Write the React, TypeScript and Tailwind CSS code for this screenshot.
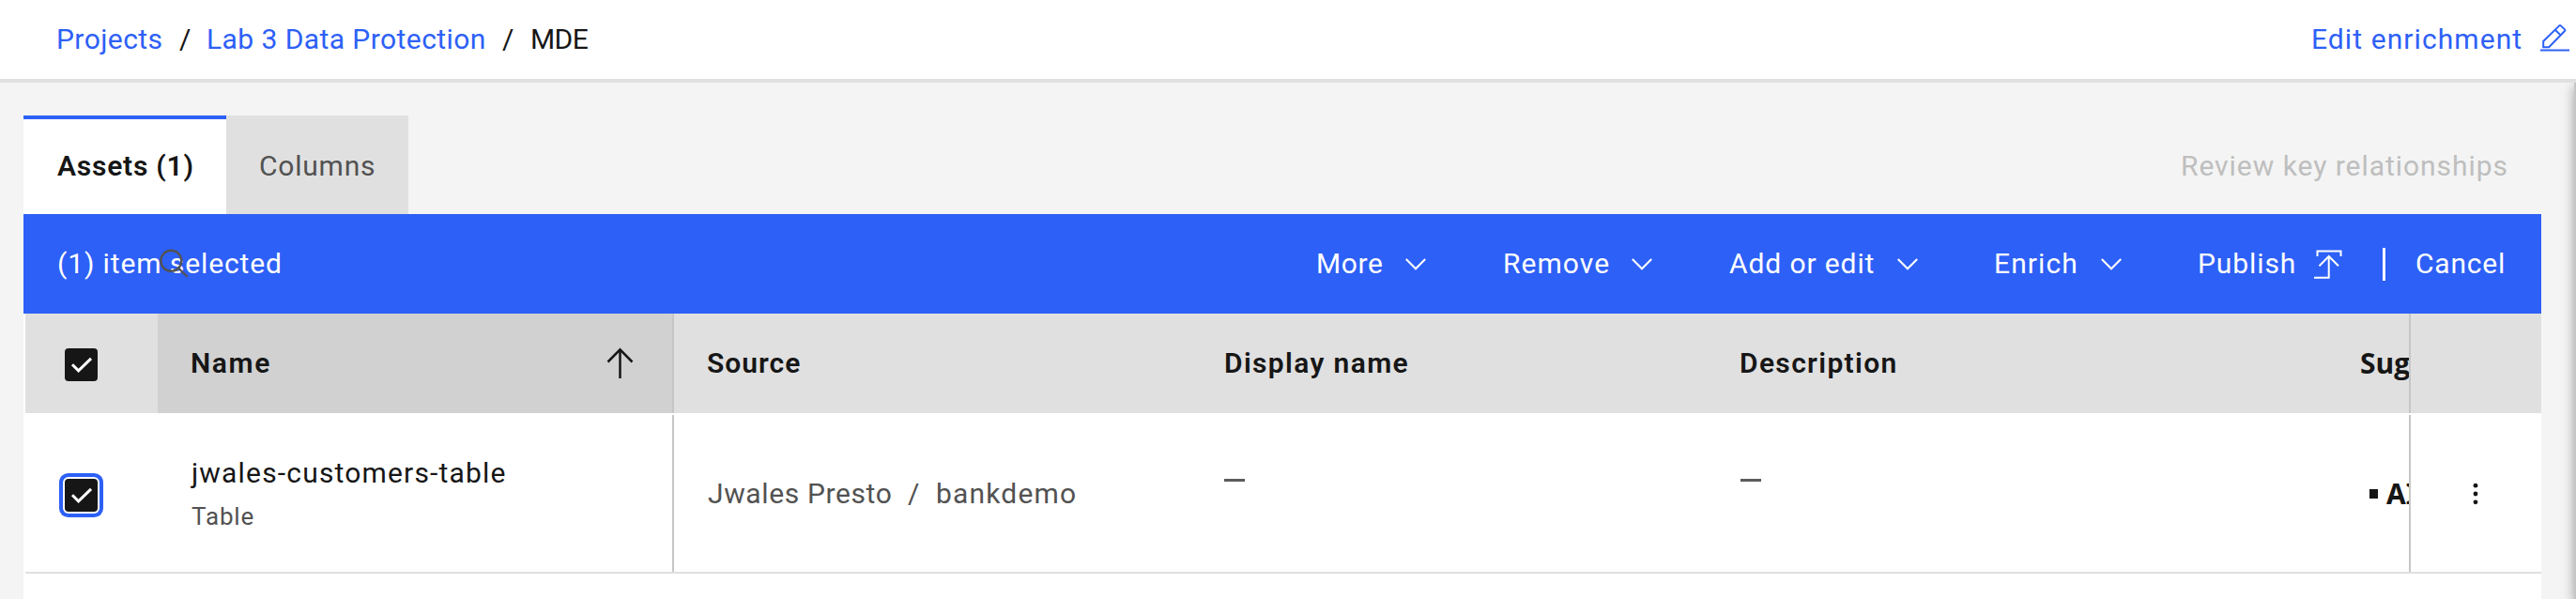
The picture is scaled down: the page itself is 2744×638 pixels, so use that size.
import type { ReactNode } from "react";

function Chevron() {
  return (
    <svg className="h-[14px] w-[24px] shrink-0" viewBox="0 0 24 14" fill="none" stroke="#fff" strokeWidth="2.1">
      <path d="M1.8 2 L12 12.2 L22.2 2" />
    </svg>
  );
}

function MenuButton({ className, labelClass, children }: { className: string; labelClass: string; children: ReactNode }) {
  return (
    <button className={`flex shrink-0 items-center text-left ${className}`}>
      <span className={`shrink-0 whitespace-nowrap ${labelClass}`}>{children}</span>
      <Chevron />
    </button>
  );
}

function Checkbox({ focused = false }: { focused?: boolean }) {
  return (
    <span
      className={`block h-[35px] w-[35px] shrink-0 rounded-[4px] bg-[#161616] ${
        focused ? "shadow-[0_0_0_2px_#fff,0_0_0_6px_#2d60f6]" : ""
      }`}
    >
      <svg className="h-[35px] w-[35px]" viewBox="0 0 35 35" fill="none" stroke="#fff" strokeWidth="3">
        <path d="M8 17.2 L14.6 23.8 L28 10.8" />
      </svg>
    </span>
  );
}

function PageHeader() {
  return (
    <header className="flex h-[88px] shrink-0 items-center border-b-4 border-[#e0e0e0] bg-white pl-[60px] text-[#2d60f6]">
      <nav className="flex items-center whitespace-nowrap">
        <a className="w-[131px] tracking-[0.43px]">Projects</a>
        <span className="w-[29px] text-[#161616]">/</span>
        <a className="w-[315px] tracking-[0.43px]">Lab 3 Data Protection</a>
        <span className="w-[30px] text-[#161616]">/</span>
        <span className="tracking-[-0.6px] text-[#161616]">MDE</span>
      </nav>
      <button className="ml-auto flex w-[282px] shrink-0 items-center">
        <span className="w-[244px] shrink-0 whitespace-nowrap text-left tracking-[1.08px]">Edit enrichment</span>
        <svg className="mb-[3px] h-[31px] w-[32px] shrink-0" viewBox="0 0 32 31" fill="none" stroke="#2d60f6" strokeWidth="2">
          <path d="M0 28.5 H31" />
          <path d="M3.2 25.3 V19 L20.2 2.4 Q21 1.6 21.8 2.4 L26 6.4 Q26.8 7.2 26 8 L9.2 25.3 Z M15.8 6.8 L21.8 12.6" />
        </svg>
      </button>
    </header>
  );
}

function Tabs() {
  return (
    <div className="flex h-[105px] shrink-0 items-stretch whitespace-nowrap">
      <button className="flex w-[216px] items-center border-t-4 border-[#2d60f6] bg-white pb-[2px] pl-[36px] font-semibold tracking-[0.77px] text-[#161616]">
        Assets (1)
      </button>
      <button className="flex w-[194px] items-center bg-[#e0e0e0] pl-[35px] pt-[2px] tracking-[0.78px] text-[#525252]">
        Columns
      </button>
      <button className="ml-auto flex w-[385px] items-center pl-px pt-[2px] tracking-[0.96px] text-[#bebebe]">
        Review key relationships
      </button>
    </div>
  );
}

function BatchToolbar() {
  return (
    <div className="flex h-[106px] shrink-0 items-center bg-[#2d60f6] pl-[36px] text-white">
      <div className="relative w-[1341px] shrink-0 whitespace-nowrap tracking-[0.89px]">
        (1) item selected
        <svg className="absolute left-[107px] top-[3px] h-[34px] w-[34px]" viewBox="0 0 34 34" fill="none" stroke="#525252" strokeWidth="2.4">
          <circle cx="14.3" cy="13.8" r="11" />
          <path d="M22 21.5 L31.8 31" />
        </svg>
      </div>
      <MenuButton className="w-[199px]" labelClass="w-[94px] tracking-[0.6px]">More</MenuButton>
      <MenuButton className="w-[241px]" labelClass="w-[136px] tracking-[1.05px]">Remove</MenuButton>
      <MenuButton className="w-[282px]" labelClass="w-[178px] tracking-[0.89px]">Add or edit</MenuButton>
      <MenuButton className="w-[217px]" labelClass="w-[113px] tracking-[1.08px]">Enrich</MenuButton>
      <button className="flex w-[197px] shrink-0 items-center text-left">
        <span className="w-[124px] shrink-0 tracking-[0.9px]">Publish</span>
        <svg className="h-[32px] w-[30px] shrink-0" viewBox="0 0 30 32" fill="none" stroke="#fff" strokeWidth="2">
          <path d="M3.5 8 V2.5 H28.5 V8" />
          <path d="M0 30.7 H15.7 V9" />
          <path d="M5.5 18.3 L15.7 8 L26 18.3" />
        </svg>
      </button>
      <span className="h-[35px] w-[3px] shrink-0 bg-white" />
      <button className="ml-[32px] shrink-0 tracking-[0.8px]">Cancel</button>
    </div>
  );
}

function HeaderRow() {
  return (
    <div className="ml-[2px] flex h-[106px] shrink-0 whitespace-nowrap bg-[#e0e0e0] font-semibold text-[#161616]">
      <div className="flex w-[141px] shrink-0 items-center pl-[42px] pt-[3px]">
        <Checkbox />
      </div>
      <div className="flex w-[550px] shrink-0 items-center border-r-2 border-[#c6c6c6] bg-[#d1d1d1] pl-[35px] tracking-[1.6px]">
        Name
        <svg className="ml-auto mr-[41px] h-[34px] w-[29px]" viewBox="0 0 29 34" fill="none" stroke="#161616" strokeWidth="2.5">
          <path d="M14.5 33 V2" />
          <path d="M1.5 15.5 L14.5 2.3 L27.5 15.5" />
        </svg>
      </div>
      <div className="flex w-[550px] shrink-0 items-center pl-[35px] tracking-[1px]">Source</div>
      <div className="flex w-[550px] shrink-0 items-center pl-[36px] tracking-[1.36px]">Display name</div>
      <div className="flex w-[660px] shrink-0 items-center pl-[35px] tracking-[1.34px]">Description</div>
      <div className="flex w-[90px] shrink-0 items-center overflow-hidden border-r-2 border-[#c6c6c6] pl-[36px] font-['Open_Sans',sans-serif] font-bold">
        Sug
      </div>
    </div>
  );
}

function AssetRow() {
  return (
    <div className="ml-[2px] mt-[2px] flex h-[169px] shrink-0 whitespace-nowrap border-b-2 border-[#e0e0e0] bg-white text-[#525252]">
      <div className="flex w-[141px] shrink-0 items-center pl-[42px] pt-[4px]">
        <Checkbox focused />
      </div>
      <div className="flex w-[550px] shrink-0 flex-col justify-center gap-[6px] border-r-2 border-[#c6c6c6] pl-[36px] pt-[2px]">
        <div className="leading-[40px] tracking-[1.18px] text-[#161616]">jwales-customers-table</div>
        <div className="text-[26px] leading-[40px] tracking-[0.84px]">Table</div>
      </div>
      <div className="flex w-[550px] shrink-0 items-center pl-[36px]">
        <span className="w-[213px] tracking-[0.62px]">Jwales Presto</span>
        <span className="w-[30px]">/</span>
        <span className="tracking-[1.17px]">bankdemo</span>
      </div>
      <div className="w-[550px] shrink-0 pl-[36px] pt-[68px]">
        <div className="h-[3px] w-[22px] bg-[#5c5c5c]" />
      </div>
      <div className="w-[660px] shrink-0 pl-[36px] pt-[68px]">
        <div className="h-[3px] w-[22px] bg-[#5c5c5c]" />
      </div>
      <div className="flex w-[90px] shrink-0 items-center overflow-hidden border-r-2 border-[#c6c6c6] pl-[46px] text-[#161616]">
        <span className="mr-[9px] h-[10px] w-[9px] shrink-0 bg-[#161616]" />
        <span className="font-['Noto_Sans',sans-serif] text-[30px] font-bold">AI</span>
      </div>
      <div className="flex flex-1 items-center justify-center pr-[2px]">
        <svg className="h-[24px] w-[6px]" viewBox="0 0 6 24" fill="#161616">
          <circle cx="3" cy="3.2" r="2.4" />
          <circle cx="3" cy="12" r="2.4" />
          <circle cx="3" cy="20.8" r="2.4" />
        </svg>
      </div>
    </div>
  );
}

export default function App() {
  return (
    <div className="flex h-[638px] w-[2744px] flex-col overflow-hidden bg-[#f4f4f4] font-[Roboto,sans-serif] text-[30px] leading-[40px]">
      <PageHeader />
      <div className="flex min-h-0 flex-1 overflow-hidden">
        <main className="flex w-[2742px] shrink-0 flex-col pl-[25px] pr-[35px] pt-[35px]">
          <Tabs />
          <section className="flex flex-1 flex-col bg-white">
            <BatchToolbar />
            <HeaderRow />
            <AssetRow />
          </section>
        </main>
        <aside className="w-[60px] shrink-0 bg-[#c6c6c6] shadow-[0_4px_12px_rgba(0,0,0,0.35)]" />
      </div>
    </div>
  );
}
